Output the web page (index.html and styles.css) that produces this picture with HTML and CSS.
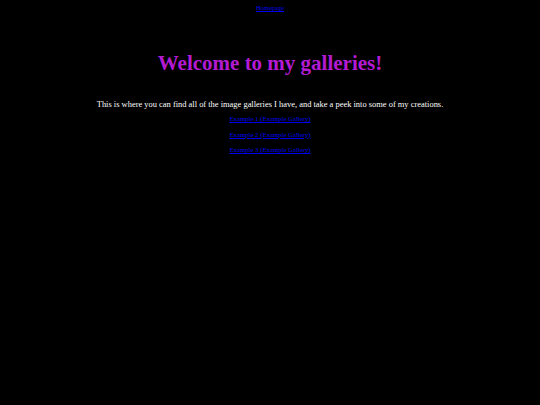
FILE: index.html
```html
<!DOCTYPE html>
<html>
<head>
<meta charset="utf-8">
<title>Galleries</title>
<link rel="stylesheet" href="styles.css">
</head>
<body>
<nav class="nav"><a href="#">Homepage</a></nav>
<main class="main">
<h1 class="title">Welcome to my galleries!</h1>
<p class="intro">This is where you can find all of the image galleries I have, and take a peek into some of my creations.</p>
<ul class="links">
<li><a href="#">Example 1 (Example Gallery)</a></li>
<li><a href="#">Example 2 (Example Gallery)</a></li>
<li><a href="#">Example 3 (Example Gallery)</a></li>
</ul>
</main>
</body>
</html>
```
FILE: styles.css
```css
html, body {
  margin: 0;
  padding: 0;
  background: #000;
  color: #fff;
  font-family: "Liberation Serif", "Times New Roman", serif;
}
body {
  display: flex;
  flex-direction: column;
  align-items: center;
  min-height: 405px;
}
a {
  color: #0000ee;
}
.nav {
  font-size: 6.5px;
  padding-top: 4px;
  line-height: 7px;
}
.main {
  display: flex;
  flex-direction: column;
  align-items: center;
}
.title {
  color: #b31bd3;
  font-size: 21px;
  font-weight: bold;
  margin: 39px 0 0;
  line-height: 26px;
}
.intro {
  font-size: 8.45px;
  margin: 23px 0 0;
  line-height: 10px;
}
.links {
  list-style: none;
  margin: 6px 0 0;
  padding: 0;
  display: flex;
  flex-direction: column;
  align-items: center;
  gap: 8.5px;
  font-size: 6.75px;
  line-height: 7px;
}
```
